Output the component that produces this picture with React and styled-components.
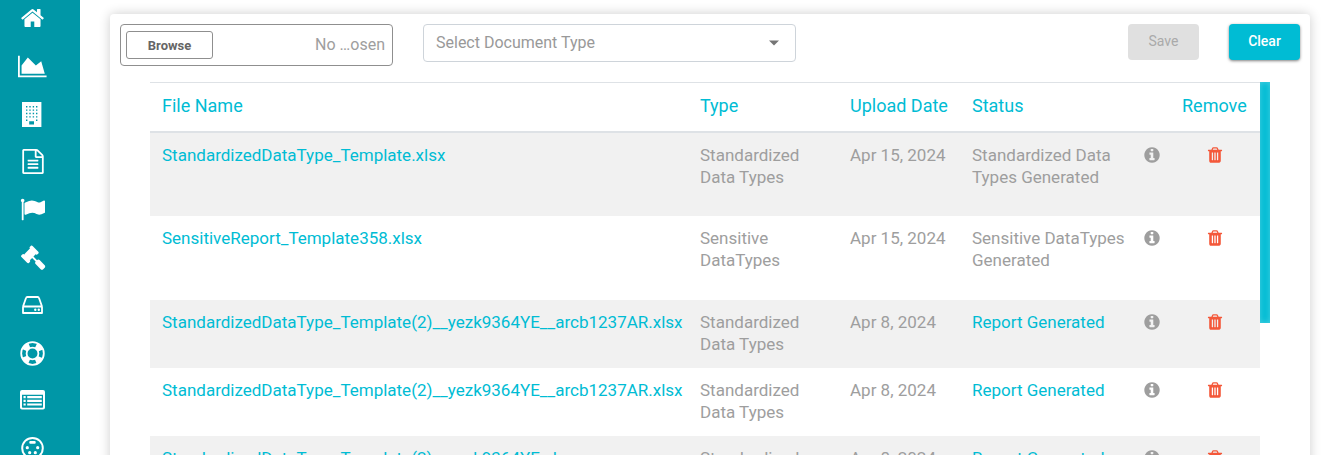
import React, { useRef } from 'react';
import styled, { createGlobalStyle } from 'styled-components';

const GlobalStyle = createGlobalStyle`
    *, *::before, *::after {
        box-sizing: border-box;
    }
    body {
        margin: 0;
        background-color: #fff;
        color: #9e9e9e;
        font-family: Roboto, "Liberation Sans", sans-serif;
    }
`;

const Page = styled.div`
    display: flex;
    height: 100vh;
    overflow: hidden;
`;

const Sidebar = styled.nav`
    display: flex;
    flex: 0 0 80px;
    flex-direction: column;
    align-items: center;
    gap: 12px;
    padding-right: 16px;
    background-color: #0097a7;
`;

const SidebarLink = styled.a`
    flex: 0 0 36px;
    width: 36px;
    color: #fff;

    svg {
        display: block;
        width: 36px;
        height: 36px;
        fill: currentColor;
    }
`;

const Main = styled.main`
    flex: 1;
    min-width: 0;
    padding: 14px 17px 0 30px;
`;

const Card = styled.section`
    min-height: 100vh;
    padding: 10px;
    border-radius: 4px;
    background-color: #fff;
    box-shadow: 0 0 12px rgba(0, 0, 0, 0.2);
`;

const Toolbar = styled.div`
    display: flex;
    align-items: flex-start;
    gap: 30px;
    margin-bottom: 16px;
`;

const FilePicker = styled.div`
    display: flex;
    flex: 0 0 273px;
    align-items: center;
    justify-content: space-between;
    height: 42px;
    padding: 0 7px 0 5px;
    border: 1px solid #8f8f8f;
    border-radius: 4px;
    font-size: 16px;
    line-height: 20px;
`;

const BrowseButton = styled.button`
    width: 87px;
    height: 28px;
    padding: 0;
    border: 1px solid #8f8f8f;
    border-radius: 3px;
    background-color: #fff;
    color: #666;
    font: 700 13px Roboto, sans-serif;
`;

const SelectBox = styled.div`
    display: grid;
    flex: 0 0 373px;
    align-items: center;
    height: 38px;

    > * {
        grid-area: 1 / 1;
    }

    svg {
        justify-self: end;
        margin-right: 16px;
        fill: #757575;
        pointer-events: none;
    }
`;

const Select = styled.select`
    appearance: none;
    width: 100%;
    height: 38px;
    padding: 0 12px 2px;
    border: 1px solid #ced4da;
    border-radius: 4px;
    background-color: #fff;
    color: #999;
    font: 400 16px Roboto, sans-serif;
`;

const Actions = styled.div`
    display: flex;
    gap: 30px;
    margin-left: auto;
`;

const ActionButton = styled.button`
    width: 71px;
    height: 36px;
    padding: 0 0 2px;
    border: 0;
    border-radius: 4px;
    background-color: #00bcd4;
    box-shadow: 0 1px 3px rgba(0, 0, 0, 0.5);
    color: #fff;
    font: 500 14px Roboto, sans-serif;

    &:disabled {
        background-color: #e0e0e0;
        box-shadow: none;
        color: #aaa;
        font-weight: 400;
    }
`;

const TableArea = styled.div`
    display: flex;
    align-items: flex-start;
    margin: 0 30px;
`;

const ScrollThumb = styled.div`
    flex: 0 0 10px;
    height: 241px;
    background-color: #00bcd4;
    box-shadow: inset 0 0 6px rgba(255, 255, 255, 0.3);
`;

const Table = styled.table`
    flex: 1;
    table-layout: fixed;
    width: 100%;
    border-collapse: collapse;
    font-size: 17px;
    line-height: 22px;
`;

const HeaderCell = styled.th`
    height: 49px;
    padding: 0 12px 2px;
    border-top: 1px solid #dee2e6;
    border-bottom: 2px solid #dee2e6;
    color: #00bcd4;
    font-size: 18px;
    font-weight: 400;
    text-align: left;
    white-space: nowrap;
`;

const Row = styled.tr`
    height: ${props => (props.$tall ? '84px' : '68px')};

    &:nth-child(odd) {
        background-color: #f1f1f1;
    }
`;

const Cell = styled.td`
    padding: 11px ${props => (props.$flush ? '0' : '12px')} 11px 12px;
    text-align: ${props => props.$align || 'left'};
    vertical-align: top;
    white-space: ${props => (props.$nowrap ? 'nowrap' : 'normal')};
`;

const TableLink = styled.a`
    color: #00bcd4;
    text-decoration: none;
`;

const IconButton = styled.button`
    display: inline-block;
    padding: 0;
    border: 0;
    background: none;
    color: ${props => props.$color};
    vertical-align: top;

    svg {
        display: block;
        width: 18px;
        height: 22px;
        fill: currentColor;
    }
`;

const Glyph = ({ x, y, d }) => (
    <svg viewBox="0 0 36 36" aria-hidden="true">
        <path transform={`translate(${x} ${y}) scale(0.01395)`} d={d} />
    </svg>
);

const HOME = 'M1472 992v480q0 26-19 45t-45 19h-384v-384h-256v384h-384q-26 0-45-19t-19-45v-480q0-1 .5-3t.5-3l575-474 575 474q1 2 1 6zm223-69l-62 74q-8 9-21 11h-3q-13 0-21-7l-692-577-692 577q-12 8-24 7-13-2-21-11l-62-74q-8-10-7-23.5t11-21.5l719-599q32-26 76-26t76 26l244 204v-195q0-14 9-23t23-9h192q14 0 23 9t9 23v408l219 182q10 8 11 21.5t-7 23.5z';
const CHART = 'M2048 1536v128h-2048v-1536h128v1408h1920zm-384-1024l256 896h-1664v-576l448-576 576 576z';
const FILE = 'M1596 380q28 28 48 76t20 88v1152q0 40-28 68t-68 28h-1344q-40 0-68-28t-28-68v-1600q0-40 28-68t68-28h896q40 0 88 20t76 48zm-444-244v376h376q-10-29-22-41l-313-313q-12-12-41-22zm384 1528v-1024h-416q-40 0-68-28t-28-68v-416h-768v1536h1280zm-1024-864q0-14 9-23t23-9h704q14 0 23 9t9 23v64q0 14-9 23t-23 9h-704q-14 0-23-9t-9-23v-64zm736 224q14 0 23 9t9 23v64q0 14-9 23t-23 9h-704q-14 0-23-9t-9-23v-64q0-14 9-23t23-9h704zm0 256q14 0 23 9t9 23v64q0 14-9 23t-23 9h-704q-14 0-23-9t-9-23v-64q0-14 9-23t23-9h704z';
const FLAG = 'M320 256q0 72-64 110v1266q0 13-9.5 22.5t-22.5 9.5h-64q-13 0-22.5-9.5t-9.5-22.5v-1266q-64-38-64-110 0-53 37.5-90.5t90.5-37.5 90.5 37.5 37.5 90.5zm1472 64v763q0 25-12.5 38.5t-39.5 27.5q-215 116-369 116-61 0-123.5-22t-108.5-48-115.5-48-142.5-22q-192 0-464 146-17 9-33 9-26 0-45-19t-19-45v-742q0-32 31-55 21-14 79-43 236-120 421-120 107 0 200 29t219 88q38 19 88 19 54 0 117.5-21t110-47 88-47 54.5-21q26 0 45 19t19 45z';
const GAVEL = 'M1771 1536q0 53-37 90l-107 108q-39 37-91 37-53 0-90-37l-363-364q-38-36-38-90 0-53 43-96l-256-256-126 126q-14 14-34 14t-34-14q2 2 12.5 12t12.5 13 10 11.5 10 13.5 6 13.5 5.5 16.5 1.5 18q0 38-28 68-3 3-16.5 18t-19 20.5-18.5 16.5-22 15.5-22 9-26 4.5q-40 0-68-28l-408-408q-28-28-28-68 0-13 4.5-26t9-22 15.5-22 16.5-18.5 20.5-19 18-16.5q30-28 68-28 10 0 18 1.5t16.5 5.5 13.5 6 13.5 10 11.5 10 13 12.5 12 12.5q-14-14-14-34t14-34l348-348q14-14 34-14t34 14q-2-2-12.5-12t-12.5-13-10-11.5-10-13.5-6-13.5-5.5-16.5-1.5-18q0-38 28-68 3-3 16.5-18t19-20.5 18.5-16.5 22-15.5 22-9 26-4.5q40 0 68 28l408 408q28 28 28 68 0 13-4.5 26t-9 22-15.5 22-16.5 18.5-20.5 19-18 16.5q-30 28-68 28-10 0-18-1.5t-16.5-5.5-13.5-6-13.5-10-11.5-10-13-12.5-12-12.5q14 14 14 34t-14 34l-126 126 256 256q43-43 96-43 52 0 91 37l363 363q37 39 37 91z';
const INFO = 'M1152 1376v-160q0-14-9-23t-23-9h-96v-512q0-14-9-23t-23-9h-320q-14 0-23 9t-9 23v160q0 14 9 23t23 9h96v320h-96q-14 0-23 9t-9 23v160q0 14 9 23t23 9h448q14 0 23-9t9-23zm-128-896v-160q0-14-9-23t-23-9h-192q-14 0-23 9t-9 23v160q0 14 9 23t23 9h192q14 0 23-9t9-23zm640 416q0 209-103 385.5t-279.5 279.5-385.5 103-385.5-103-279.5-279.5-103-385.5 103-385.5 279.5-279.5 385.5-103 385.5 103 279.5 279.5 103 385.5z';
const TRASH = 'M704 1376v-704q0-14-9-23t-23-9h-64q-14 0-23 9t-9 23v704q0 14 9 23t23 9h64q14 0 23-9t9-23zm256 0v-704q0-14-9-23t-23-9h-64q-14 0-23 9t-9 23v704q0 14 9 23t23 9h64q14 0 23-9t9-23zm256 0v-704q0-14-9-23t-23-9h-64q-14 0-23 9t-9 23v704q0 14 9 23t23 9h64q14 0 23-9t9-23zm-544-992h448l-48-117q-7-9-17-11h-317q-10 2-17 11zm928 32v64q0 14-9 23t-23 9h-96v948q0 83-47 143.5t-113 60.5h-832q-66 0-113-58.5t-47-141.5v-952h-96q-14 0-23-9t-9-23v-64q0-14 9-23t23-9h309l70-167q15-37 54-63t79-26h320q40 0 79 26t54 63l70 167h309q14 0 23 9t9 23z';

// four columns of windows, with the lowest row broken by the door
const windows = [10, 13.4, 16.8, 20.2, 23.6].map(y => (
    (y > 23 ? [12, 22] : [12, 15.3, 18.7, 22]).map(x => `M${x} ${y}h1.4v1.4h-1.4z`).join('')
)).join('');

const BuildingIcon = () => (
    <svg viewBox="0 0 36 36" aria-hidden="true">
        <path fillRule="evenodd" d={`M8 6h19.4v25h-19.4zM15.2 25.2h4.8v3.2h-4.8z${windows}`} />
    </svg>
);

const DriveIcon = () => (
    <svg viewBox="0 0 36 36" aria-hidden="true">
        <path
            fill="none"
            stroke="currentColor"
            strokeWidth="1.8"
            strokeLinejoin="round"
            d="M9 18.5v6.5h19v-6.5zM9 18.5l3-8.5q.3-1 1.3-1h10.4q1 0 1.3 1l3 8.5"
        />
        <circle cx="21.3" cy="21.8" r="1.2" />
        <circle cx="24.8" cy="21.8" r="1.2" />
    </svg>
);

const LifeRingIcon = () => (
    <svg viewBox="0 0 36 36" aria-hidden="true">
        <g fill="none" stroke="currentColor">
            <circle cx="18.5" cy="17.5" r="11.3" strokeWidth="1.8" />
            <circle cx="18.5" cy="17.5" r="5.9" strokeWidth="1.8" />
            <circle
                cx="18.5"
                cy="17.5"
                r="8.6"
                strokeWidth="5.4"
                strokeDasharray="6.755 6.755"
                strokeDashoffset="3.377"
                transform="rotate(45 18.5 17.5)"
            />
        </g>
    </svg>
);

const ListIcon = () => (
    <svg viewBox="0 0 36 36" aria-hidden="true">
        <path
            fillRule="evenodd"
            d="M8 6h21q2 0 2 2v15.5q0 2-2 2h-21q-2 0-2-2v-15.5q0-2 2-2zM8 10.7v12.3q0 .7.7.7h19.6q.7 0 .7-.7v-12.3z"
        />
        <path d="M9.5 12h2.2v2.2h-2.2zM9.500 15.7h2.2v2.2h-2.2zM9.5 19.4h2.2v2.2h-2.2zM13.2 12h14.6v2.2h-14.6zM13.2 15.7h14.6v2.2h-14.6zM13.2 19.4h14.6v2.2h-14.6z" />
    </svg>
);

const SocketIcon = () => (
    <svg viewBox="0 0 36 36" aria-hidden="true">
        <circle cx="18.5" cy="16.2" r="10.3" fill="none" stroke="currentColor" strokeWidth="2" />
        <rect x="15.3" y="9" width="6.4" height="2.8" rx="1" />
        <circle cx="13.3" cy="15.7" r="1.6" />
        <circle cx="23.7" cy="15.7" r="1.6" />
        <circle cx="15.7" cy="20.7" r="1.6" />
        <circle cx="21.3" cy="20.7" r="1.6" />
    </svg>
);

const menu = [
    { label: 'Home', icon: <Glyph x={6} y={5.5} d={HOME} /> },
    { label: 'Analytics', icon: <Glyph x={4} y={6} d={CHART} /> },
    { label: 'Organization', icon: <BuildingIcon /> },
    { label: 'Documents', icon: <Glyph x={6.5} y={5} d={FILE} /> },
    { label: 'Flags', icon: <Glyph x={6} y={5} d={FLAG} /> },
    { label: 'Rules', icon: <Glyph x={6.5} y={5} d={GAVEL} /> },
    { label: 'Storage', icon: <DriveIcon /> },
    { label: 'Support', icon: <LifeRingIcon /> },
    { label: 'Lists', icon: <ListIcon /> },
    { label: 'Connections', icon: <SocketIcon /> },
];

const files = [
    { name: 'StandardizedDataType_Template.xlsx', type: 'Standardized Data Types', date: 'Apr 15, 2024', status: 'Standardized Data Types Generated' },
    { name: 'SensitiveReport_Template358.xlsx', type: 'Sensitive DataTypes', date: 'Apr 15, 2024', status: 'Sensitive DataTypes Generated' },
    { name: 'StandardizedDataType_Template(2)__yezk9364YE__arcb1237AR.xlsx', type: 'Standardized Data Types', date: 'Apr 8, 2024', status: 'Report Generated', report: true },
    { name: 'StandardizedDataType_Template(2)__yezk9364YE__arcb1237AR.xlsx', type: 'Standardized Data Types', date: 'Apr 8, 2024', status: 'Report Generated', report: true },
    { name: 'StandardizedDataType_Template(2)__yezk9364YE.xlsx', type: 'Standardized Data Types', date: 'Apr 8, 2024', status: 'Report Generated', report: true },
];

const FileRow = ({ file }) => (
    <Row $tall={!file.report}>
        <Cell $nowrap><TableLink href="#file">{file.name}</TableLink></Cell>
        <Cell>{file.type}</Cell>
        <Cell $nowrap>{file.date}</Cell>
        <Cell $flush>
            {file.report ? <TableLink href="#report">{file.status}</TableLink> : file.status}
        </Cell>
        <Cell $flush>
            <IconButton $color="#9e9e9e" aria-label="Details">
                <svg viewBox="0 -200 1792 2190"><path d={INFO} /></svg>
            </IconButton>
        </Cell>
        <Cell $align="center">
            <IconButton $color="#f4583a" aria-label="Remove">
                <svg viewBox="0 -200 1792 2190"><path d={TRASH} /></svg>
            </IconButton>
        </Cell>
    </Row>
);

const App = () => {
    const fileInput = useRef(null);

    return (
        <>
            <GlobalStyle />
            <Page>
                <Sidebar aria-label="Main">
                    {menu.map(item => (
                        <SidebarLink key={item.label} href="#" aria-label={item.label}>
                            {item.icon}
                        </SidebarLink>
                    ))}
                </Sidebar>
                <Main>
                    <Card>
                        <Toolbar>
                            <FilePicker>
                                <BrowseButton type="button" onClick={() => fileInput.current.click()}>
                                    Browse
                                </BrowseButton>
                                <input ref={fileInput} type="file" hidden aria-label="File" />
                                <span>No …osen</span>
                            </FilePicker>
                            <SelectBox>
                                <Select aria-label="Document type">
                                    <option>Select Document Type</option>
                                </Select>
                                <svg width="12" height="6" viewBox="0 0 12 6"><path d="M1 .5h10l-5 5z" /></svg>
                            </SelectBox>
                            <Actions>
                                <ActionButton type="button" disabled>Save</ActionButton>
                                <ActionButton type="button">Clear</ActionButton>
                            </Actions>
                        </Toolbar>
                        <TableArea>
                            <Table>
                                <colgroup>
                                    <col />
                                    <col width="150" />
                                    <col width="122" />
                                    <col width="171" />
                                    <col width="39" />
                                    <col width="90" />
                                </colgroup>
                                <thead>
                                    <tr>
                                        <HeaderCell>File Name</HeaderCell>
                                        <HeaderCell>Type</HeaderCell>
                                        <HeaderCell>Upload Date</HeaderCell>
                                        <HeaderCell colSpan="2">Status</HeaderCell>
                                        <HeaderCell>Remove</HeaderCell>
                                    </tr>
                                </thead>
                                <tbody>
                                    {files.map((file, index) => (
                                        <FileRow key={index} file={file} />
                                    ))}
                                </tbody>
                            </Table>
                            <ScrollThumb />
                        </TableArea>
                    </Card>
                </Main>
            </Page>
        </>
    );
};

export default App;
